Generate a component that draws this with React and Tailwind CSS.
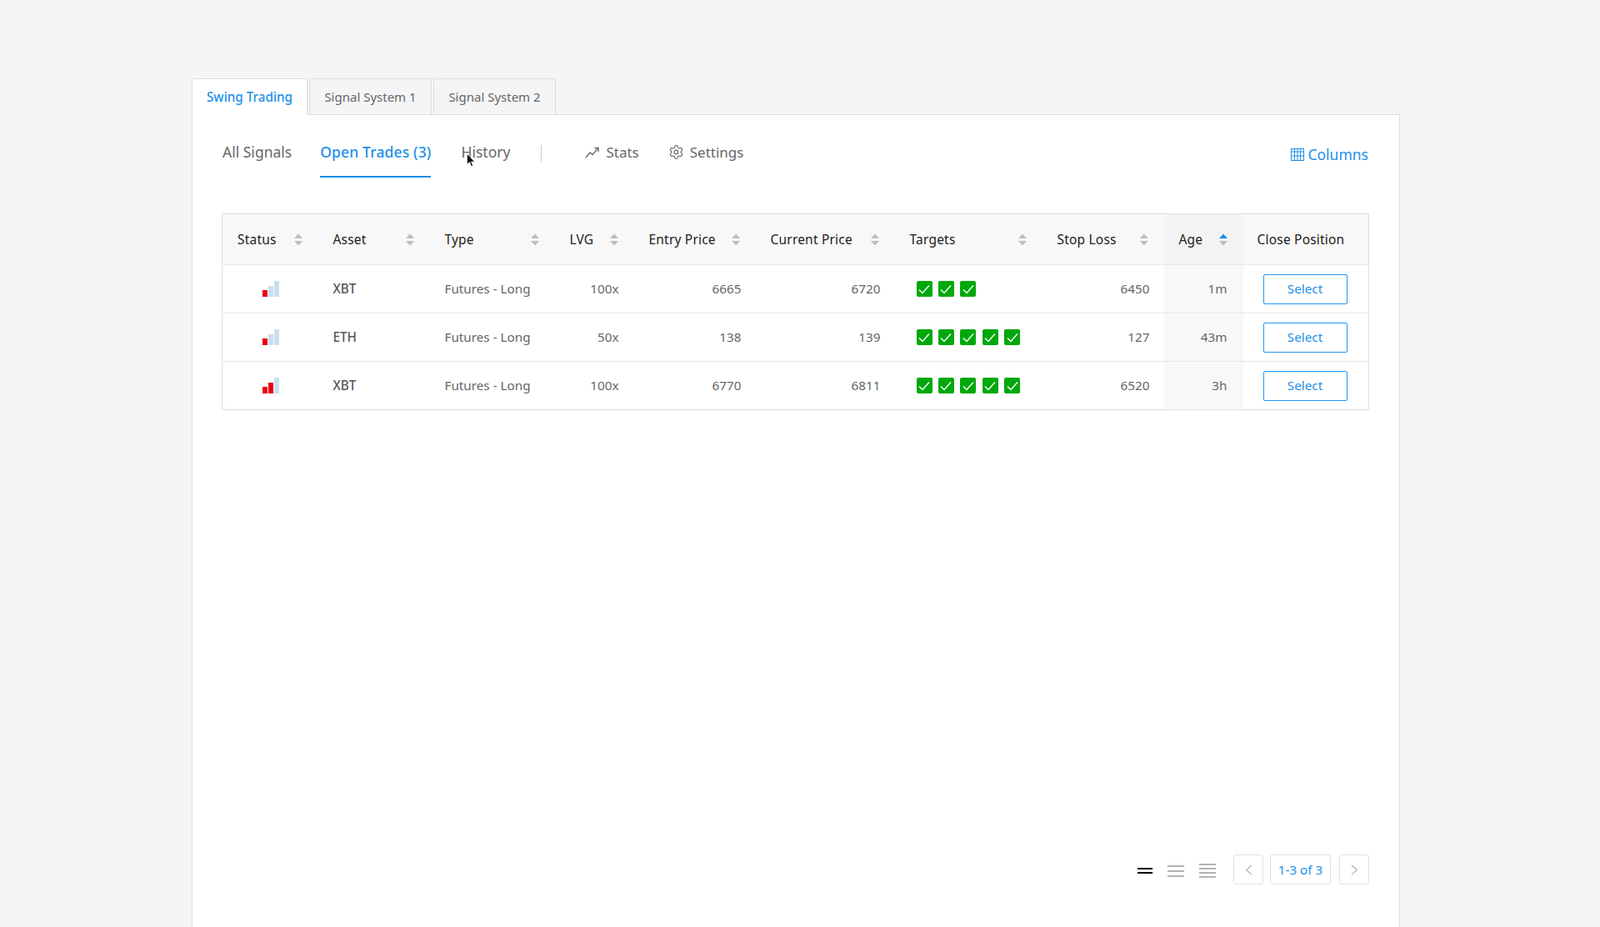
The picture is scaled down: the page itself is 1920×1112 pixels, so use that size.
import { Settings } from "lucide-react";

const rows = [
  { level: 1, asset: "XBT", lvg: "100x", entry: "6665", current: "6720", targets: 3, stop: "6450", age: "1m" },
  { level: 1, asset: "ETH", lvg: "50x", entry: "138", current: "139", targets: 5, stop: "127", age: "43m" },
  { level: 2, asset: "XBT", lvg: "100x", entry: "6770", current: "6811", targets: 5, stop: "6520", age: "3h" },
];

const columns = [
  { label: "Status", width: "w-[115px]" },
  { label: "Asset", width: "w-[134px]" },
  { label: "Type", width: "w-[150px]" },
  { label: "LVG", width: "w-[95px]" },
  { label: "Entry Price", width: "w-[146px]" },
  { label: "Current Price", width: "w-[167px]" },
  { label: "Targets", width: "w-[177px]" },
  { label: "Stop Loss", width: "w-[146px]" },
];

function SortArrows({ active }) {
  return (
    <svg width="10" height="15" viewBox="0 0 10 15" className="shrink-0">
      <path d="M5 0.5 L10 6 H0 Z" fill={active ? "#1d8fe8" : "#bdbdbd"} />
      <path d="M5 14.5 L10 9 H0 Z" fill="#bdbdbd" />
    </svg>
  );
}

function Bars({ level }) {
  return (
    <div className="flex items-end justify-center gap-px pl-px">
      <div className="w-[6px] h-[8px] bg-[#e8000f]" />
      <div className={`w-[6px] h-[13px] ${level > 1 ? "bg-[#e8000f]" : "bg-[#c9dff0]"}`} />
      <div className="w-[6px] h-[19px] bg-[#c9dff0]" />
    </div>
  );
}

function Check() {
  return (
    <div className="w-[19px] h-[19px] rounded-[2px] bg-[#00a80b] flex items-center justify-center">
      <svg width="14" height="12" viewBox="0 0 14 12" fill="none">
        <path d="M1 6.5 L5 10.5 L13 1.5" stroke="white" strokeWidth="1.4" />
      </svg>
    </div>
  );
}

function Density({ lines, active }) {
  return (
    <div className={`flex flex-col ${active ? "w-[18px]" : "w-5"} ${lines === 3 ? "gap-[4px]" : "gap-[3px]"}`}>
      {Array.from({ length: lines }).map((_, i) => (
        <div key={i} className={`h-[2px] ${active ? "bg-black" : "bg-[#b3b3b3]"}`} />
      ))}
    </div>
  );
}

export default function App() {
  return (
    <div className="h-[1112px] overflow-hidden bg-[#f4f5f7] pt-[94px] pl-[230px] pr-[240px] flex flex-col [font-family:'Open_Sans',sans-serif] text-[#666] relative">
      {/* tabs */}
      <div className="flex gap-[2px] text-[15px] relative z-10 -mb-px">
        <div className="h-11 w-[139px] flex items-center justify-center bg-white text-[#1d8fe8] text-[15.25px] font-medium border border-b-0 border-[#ddd] rounded-t-[2px]">
          Swing Trading
        </div>
        <div className="h-[43px] w-[147px] flex items-center justify-center border border-b-0 border-[#ddd] bg-[#f4f5f7] rounded-t-[2px]">
          Signal System 1
        </div>
        <div className="h-[43px] w-[147px] flex items-center justify-center border border-b-0 border-[#ddd] bg-[#f4f5f7] rounded-t-[2px]">
          Signal System 2
        </div>
      </div>

      <div className="flex-1 flex flex-col bg-white border border-[#ddd] border-b-0 pl-[35px] pr-[36px] pb-[51px]">
        {/* sub nav */}
        <div className="flex items-start h-[118px] pt-[31px] text-[17.5px]">
          <div className="h-[44px] flex items-start ml-px mr-[34px]">All Signals</div>
          <div className="h-[44px] flex items-start mr-[36px] text-[#1d8fe8] font-medium tracking-[0.15px] border-b-2 border-[#1d8fe8]">
            Open Trades (3)
          </div>
          <div className="h-[44px] flex items-start">History</div>
          <div className="w-px h-[21px] bg-[#ccc] mt-[5px] ml-[37px] mr-[52px]" />
          <div className="flex items-center gap-[8px] mr-[35px] pt-px text-[17px]">
            <svg width="17" height="14" viewBox="0 0 17 14" fill="none" stroke="#666" strokeWidth="1.3">
              <path d="M1 13 L6 7 L9 9.5 L15.5 2" />
              <path d="M11.5 1.5 H16 V6" />
            </svg>
            Stats
          </div>
          <div className="flex items-center gap-[7px] pt-px text-[17px]">
            <Settings size={19} strokeWidth={1.4} />
            Settings
          </div>
          <div className="ml-auto flex items-center gap-[4px] pt-[3px] pr-px text-[#1d8fe8]">
            <svg width="16" height="15" viewBox="0 0 16 15" fill="none" stroke="#1d8fe8" strokeWidth="1">
              <rect x="0.5" y="0.5" width="15" height="14" />
              <path d="M0.5 4 H15.5 M0.5 9 H15.5 M4.5 0.5 V14.5 M8 0.5 V14.5 M11.5 0.5 V14.5" />
            </svg>
            Columns
          </div>
        </div>

        {/* table */}
        <table className="table-fixed w-[1377px] border border-[#ddd] border-collapse text-[15.25px]">
          <thead>
            <tr className="h-[61px] bg-[#f8f8f8] text-[#222] text-[15.5px] tracking-[0.2px]">
              {columns.map((c) => (
                <th key={c.label} className={`${c.width} pl-[18px] pr-[19px] pt-px font-normal text-left`}>
                  <div className="flex items-center justify-between">
                    {c.label}
                    <SortArrows />
                  </div>
                </th>
              ))}
              <th className="w-[95px] pl-[18px] pr-[19px] pt-px font-normal text-left bg-[#f3f3f3]">
                <div className="flex items-center justify-between">
                  Age
                  <SortArrows active />
                </div>
              </th>
              <th className="px-[17px] pt-px font-normal text-left whitespace-nowrap">Close Position</th>
            </tr>
          </thead>
          <tbody>
            {rows.map((r, i) => (
              <tr key={i} className="h-[58px] border-t border-[#e8e8e8]">
                <td className="px-[18px]">
                  <Bars level={r.level} />
                </td>
                <td className="px-[18px] font-medium text-[#555]">{r.asset}</td>
                <td className="px-[18px] whitespace-nowrap">Futures - Long</td>
                <td className="px-[18px] text-right">{r.lvg}</td>
                <td className="pl-[18px] pr-[17px] text-right">{r.entry}</td>
                <td className="pl-[18px] pr-[17px] text-right">{r.current}</td>
                <td className="px-[26px]">
                  <div className="flex gap-[7.4px]">
                    {Array.from({ length: r.targets }).map((_, j) => (
                      <Check key={j} />
                    ))}
                  </div>
                </td>
                <td className="pl-[18px] pr-[17px] text-right">{r.stop}</td>
                <td className="pl-[18px] pr-[19px] text-right bg-[#f8f8f8]">{r.age}</td>
                <td className="pl-[24px]">
                  <button className="w-[101px] h-[36px] border border-[#2196f3] rounded-[2px] text-[#1d8fe8]">Select</button>
                </td>
              </tr>
            ))}
          </tbody>
        </table>

        {/* footer */}
        <div className="mt-auto flex items-center justify-end text-[15.25px]">
          <div className="flex items-center gap-[18px] mr-[21px] pt-[3px]">
            <Density lines={2} active />
            <Density lines={3} />
            <Density lines={4} />
          </div>
          <div className="flex items-center text-[#1d8fe8]">
            <div className="w-[36px] h-[36px] border border-[#e0e0e0] rounded-[3px] flex items-center justify-center">
              <svg width="9" height="13" viewBox="0 0 9 13" fill="none" stroke="#b5b5b5" strokeWidth="1.2"><path d="M8 1 L1.5 6.5 L8 12" /></svg>
            </div>
            <div className="w-[73px] h-[36px] ml-[8px] mr-[10px] border border-[#e0e0e0] rounded-[3px] flex items-center justify-center">1-3 of 3</div>
            <div className="w-[36px] h-[36px] border border-[#e0e0e0] rounded-[3px] flex items-center justify-center">
              <svg width="9" height="13" viewBox="0 0 9 13" fill="none" stroke="#b5b5b5" strokeWidth="1.2"><path d="M1 1 L7.5 6.5 L1 12" /></svg>
            </div>
          </div>
        </div>
      </div>

      {/* mouse cursor */}
      <svg width="11" height="17" viewBox="0 0 11 17" className="absolute left-[560px] top-[184px] z-20">
        <path d="M0.5 0.5 V13 L3.5 10.5 L5.5 15.5 L7.5 14.5 L5.5 10 H9.5 Z" fill="#111" stroke="#fff" strokeWidth="0.6" />
      </svg>
    </div>
  );
}
